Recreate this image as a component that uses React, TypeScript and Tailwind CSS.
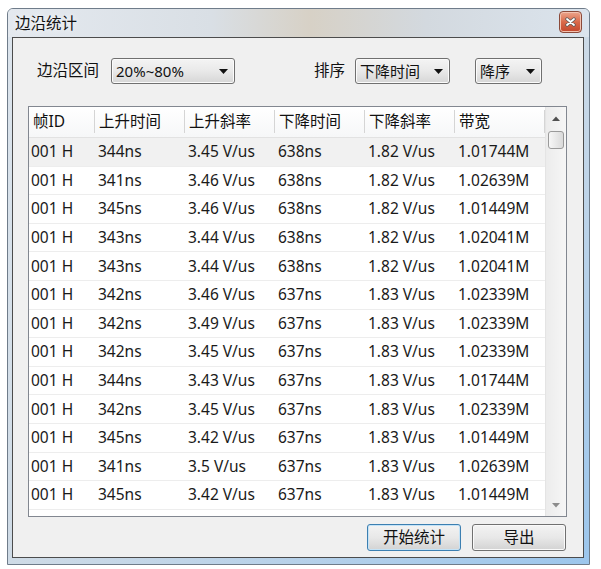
import type { ReactNode } from 'react'

type Row = [string, string, string, string, string, string]

const ROWS: Row[] = [
  ['001 H', '344ns', '3.45 V/us', '638ns', '1.82 V/us', '1.01744M'],
  ['001 H', '341ns', '3.46 V/us', '638ns', '1.82 V/us', '1.02639M'],
  ['001 H', '345ns', '3.46 V/us', '638ns', '1.82 V/us', '1.01449M'],
  ['001 H', '343ns', '3.44 V/us', '638ns', '1.82 V/us', '1.02041M'],
  ['001 H', '343ns', '3.44 V/us', '638ns', '1.82 V/us', '1.02041M'],
  ['001 H', '342ns', '3.46 V/us', '637ns', '1.83 V/us', '1.02339M'],
  ['001 H', '342ns', '3.49 V/us', '637ns', '1.83 V/us', '1.02339M'],
  ['001 H', '342ns', '3.45 V/us', '637ns', '1.83 V/us', '1.02339M'],
  ['001 H', '344ns', '3.43 V/us', '637ns', '1.83 V/us', '1.01744M'],
  ['001 H', '342ns', '3.45 V/us', '637ns', '1.83 V/us', '1.02339M'],
  ['001 H', '345ns', '3.42 V/us', '637ns', '1.83 V/us', '1.01449M'],
  ['001 H', '341ns', '3.5 V/us', '637ns', '1.83 V/us', '1.02639M'],
  ['001 H', '345ns', '3.42 V/us', '637ns', '1.83 V/us', '1.01449M'],
]

const HEADERS = ['帧ID', '上升时间', '上升斜率', '下降时间', '下降斜率', '带宽']
// first column is narrower, the rest are 90px each
const COL_W = ['w-[66px]', 'w-[90px]', 'w-[90px]', 'w-[90px]', 'w-[90px]', 'w-[90px]']

function Arrow({ up, color }: { up?: boolean; color: string }) {
  return (
    <svg width="8" height="5" viewBox="0 0 8 5">
      <path d={up ? 'M0 5 L4 0.5 L8 5 Z' : 'M0 0 L4 4.5 L8 0 Z'} fill={color} />
    </svg>
  )
}

/** Win7-style drop-down list box. */
function Combo({ value, className }: { value: string; className: string }) {
  return (
    <div
      className={`flex h-[26px] items-center justify-between rounded-[3px] border border-[#707070] bg-linear-to-b from-[#f4f4f4] via-[#e9e9e9] to-[#d6d6d6] pl-[4px] pr-[6px] text-[15px] text-[#111] shadow-[inset_0_0_0_1px_#fbfbfb] ${className}`}
    >
      <span>{value}</span>
      <svg width="9" height="5" viewBox="0 0 9 5">
        <path d="M0 0 L9 0 L4.5 5 Z" fill="#111" />
      </svg>
    </div>
  )
}

function Button({ children, primary }: { children: ReactNode; primary?: boolean }) {
  return (
    <button
      className={`flex h-[27px] w-[94px] items-center justify-center rounded-[3px] border bg-linear-to-b from-[#f3f3f3] via-[#e8e8e8] to-[#d3d3d3] text-[15.5px] text-[#111] ${
        primary
          ? 'border-[#3c7fb1] shadow-[inset_0_0_0_1px_#c4e3f7]'
          : 'border-[#707070] shadow-[inset_0_0_0_1px_#fafafa]'
      }`}
    >
      {children}
    </button>
  )
}

function CloseButton() {
  return (
    <div className="mt-[2px] mr-[7px] flex h-[22px] w-[23px] items-center justify-center rounded-[4px] border border-[#8b4a3a] bg-linear-to-b from-[#eba58c] via-[#d9694a] to-[#c2462c] shadow-[inset_0_0_0_1px_#f3c2b0]">
      <svg width="11" height="10" viewBox="0 0 11 10">
        <path d="M2 2 L9 8 M9 2 L2 8" stroke="#5a5a5a" strokeWidth="3.4" strokeLinecap="round" />
        <path d="M2 2 L9 8 M9 2 L2 8" stroke="#ffffff" strokeWidth="1.8" strokeLinecap="round" />
      </svg>
    </div>
  )
}

function Scrollbar() {
  return (
    <div className="flex w-[21px] shrink-0 flex-col bg-linear-to-r from-[#ececec] to-[#f6f6f6] border-l border-[#e4e4e4]">
      <div className="flex h-[22px] items-center justify-center">
        <Arrow up color="#505050" />
      </div>
      <div className="mx-[2px] mt-[2px] h-[18px] rounded-[3px] border border-[#9a9a9a] bg-linear-to-r from-[#f7f7f7] to-[#dadada]" />
      <div className="flex-1" />
      <div className="flex h-[22px] items-center justify-center">
        <Arrow color="#8c8c8c" />
      </div>
    </div>
  )
}

function EdgeTable() {
  return (
    <div className="ml-[15px] mt-[22px] flex h-[411px] w-[539px] border border-[#828790] bg-white">
      <div className="flex w-[516px] flex-col overflow-hidden">
        <div className="flex h-[31px] shrink-0 border-b border-[#e2e2e2] bg-linear-to-b from-white to-[#f6f7f8]">
          {HEADERS.map((h, i) => (
            <div key={h} className={`flex items-center ${COL_W[i]} relative pl-[4px] text-[15.5px] text-[#111]`}>
              {h}
              <span className="absolute right-0 top-[3px] bottom-[4px] w-px bg-[#d5d5d5]" />
            </div>
          ))}
        </div>
        {ROWS.map((r, ri) => (
          <div
            key={ri}
            className={`flex h-[28.6px] shrink-0 items-center border-b border-[#ededed] text-[15.5px] text-[#1a1a1a] ${
              ri === 0 ? 'bg-[#f1f1f1]' : ''
            }`}
          >
            {r.map((c, ci) => (
              <div key={ci} className={`${COL_W[ci]} whitespace-nowrap ${ci === 0 ? 'pl-[2px]' : 'pl-[3px]'}`}>
                {c}
              </div>
            ))}
          </div>
        ))}
        <div className="h-[28.6px] shrink-0 border-b border-[#ededed]" />
      </div>
      <Scrollbar />
    </div>
  )
}

export default function App() {
  return (
    <div className="h-[569px] w-[601px] overflow-hidden bg-white pt-[8px] pl-[7px] font-['Noto_Sans','Noto_Sans_CJK_SC',sans-serif]">
      {/* glass frame */}
      <div className="flex h-[557px] w-[583px] flex-col rounded-t-[6px] border border-[#6f7c8a] bg-linear-to-br from-[#dde5ed] via-[#cfdbe6] to-[#9cc6ec]">
        <div className="flex h-[28px] shrink-0 items-start justify-between rounded-t-[5px] bg-[linear-gradient(90deg,#e4e9ef_0%,#d9dfe5_35%,#d7d1c6_52%,#d3d9df_72%,#dbe4ed_100%)]">
          <span className="pl-[7px] pt-[3px] text-[15.5px] leading-[22px] text-[#111] [text-shadow:0_0_6px_#fff]">
            边沿统计
          </span>
          <CloseButton />
        </div>

        {/* client area */}
        <div className="ml-[4px] mb-[6px] flex w-[572px] flex-1 flex-col border border-[#4c4c4c] bg-[#f0f0f0] pt-[20px]">
          <div className="flex h-[26px] items-center pl-[24px] text-[15.5px] text-[#111]">
            <span>边沿区间</span>
            <Combo value="20%~80%" className="ml-[12px] w-[124px]" />
            <span className="ml-[79px]">排序</span>
            <Combo value="下降时间" className="ml-[10px] w-[95px] text-[15.5px]" />
            <Combo value="降序" className="ml-[25px] w-[67px] text-[15.5px]" />
          </div>

          <EdgeTable />

          <div className="mt-[7px] flex justify-end gap-[11px] pr-[17px]">
            <Button primary>开始统计</Button>
            <Button>导出</Button>
          </div>
        </div>
      </div>
    </div>
  )
}
